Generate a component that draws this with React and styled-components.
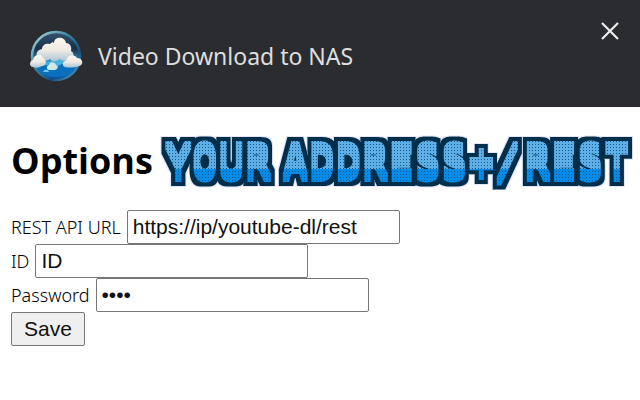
import React from "react";
import styled, { createGlobalStyle } from "styled-components";

const GlobalStyle = createGlobalStyle`
  *, *::before, *::after { box-sizing: border-box; }
  body {
    margin: 0;
    background: #fff;
    color: #000;
    font-family: "Noto Sans", "Open Sans", sans-serif;
  }
`;

const Header = styled.header`
  display: flex;
  align-items: center;
  gap: 15px;
  min-height: 107px;
  padding: 5px 18px 0 29px;
  background: #2b2c2f;
  color: #dedede;
`;

const Title = styled.div`
  flex: 1;
  font-size: 23px;
  line-height: 32px;
`;

const CloseButton = styled.button`
  display: flex;
  align-self: flex-start;
  margin-top: 14px;
  padding: 0;
  border: 0;
  background: none;
  color: #eee;
`;

const Main = styled.main`
  padding: 25px 8px 16px 11px;
`;

const HeadingRow = styled.div`
  display: flex;
  align-items: center;
  gap: 7px;
  margin-bottom: 20px;
`;

const Heading = styled.h1`
  margin: 0;
  font: 700 36px/56px "Open Sans", sans-serif;
`;

const Banner = styled.svg`
  display: block;
  flex: none;
  font: 700 44px "DejaVu Sans Mono", monospace;
`;

const Form = styled.form`
  display: flex;
  flex-direction: column;
  align-items: flex-start;
`;

const Field = styled.div`
  display: flex;
  align-items: center;
  gap: 6px;
  height: 34px;
`;

const Label = styled.label`
  font-size: 18px;
  line-height: 32px;
  font-weight: 300;
`;

const Input = styled.input`
  width: 273px;
  height: 34px;
  padding: 0 5px;
  border: 1px solid #767676;
  border-radius: 2px;
  background: #fff;
  color: #111;
  font: 21px "Liberation Sans", Arial, sans-serif;
`;

const SaveButton = styled.button`
  height: 34px;
  padding: 0 12px;
  border: 1px solid #767676;
  border-radius: 2px;
  background: #efefef;
  color: #111;
  font: 21px "Liberation Sans", Arial, sans-serif;
`;

function CloudLogo() {
  return (
    <svg width="54" height="54" viewBox="0 0 54 54" aria-hidden="true">
      <defs>
        <linearGradient id="sky" x2="0" y2="1">
          <stop offset="0" stopColor="#34546d" />
          <stop offset=".35" stopColor="#1b2f49" />
          <stop offset=".62" stopColor="#2c92c9" />
          <stop offset="1" stopColor="#064a9d" />
        </linearGradient>
        <linearGradient id="rim" x2="1" y2="1">
          <stop offset="0" stopColor="#b5dce4" />
          <stop offset=".4" stopColor="#3a879f" />
          <stop offset=".7" stopColor="#164c80" />
          <stop offset="1" stopColor="#56b8e3" />
        </linearGradient>
        <linearGradient id="cloud" x2="0" y2="1">
          <stop offset="0" stopColor="#fffaf0" />
          <stop offset=".55" stopColor="#eee9e2" />
          <stop offset="1" stopColor="#a9c5d7" />
        </linearGradient>
      </defs>
      <circle cx="27" cy="27" r="24" fill="url(#sky)" stroke="url(#rim)" strokeWidth="2.5" />
      <path d="M6 34c8-4 12-1 16 1 8 4 16-4 26-1-2 9-9 14-21 14S8 43 6 34z" fill="#0870bd" />
      <path d="M11 34c4-3 8 0 11-2 7-4 16-3 20 1-4 3-8 0-11 3-6 4-12 1-20-2z" fill="#4dbbe5" opacity=".8" />
      <path d="M14 32a6 6 0 0 1-1-12c0-4 4-6 8-5 2-2 3-2 4-1 0-7 11-7 12 0 4 0 6 4 5 8 4 2 3 8-2 8-3 3-7 2-9 0-4 3-8 3-10 0-3 2-5 2-7 0z" fill="url(#cloud)" />
      <path d="M4 38c-4 0-4-6 0-7 1-6 9-7 10-2 4 1 4 8-1 8-3 2-6 2-9 1z" fill="url(#cloud)" />
      <path d="M36 38c-3-1-3-6 1-6 1-6 8-8 11-3 4 0 6 3 5 6-3 4-13 4-17 3z" fill="url(#cloud)" />
      <path d="M20 41c-3 0-3-4 0-5 1-4 6-3 7 0 3 1 2 4-1 5z" fill="#d2e7ed" />
      <path d="M14 43c1-3 5-3 6 0z" fill="#7ac8e7" />
    </svg>
  );
}

const words = [
  { x: 5, text: "YOUR" },
  { x: 122, text: "ADDRESS" },
  { x: 308, text: "+" },
  { x: 334, text: "/" },
  { x: 364, text: "REST" },
];

function AddressBanner() {
  return (
    <Banner width="476" height="58" viewBox="0 0 476 58" role="img" aria-label="YOUR ADDRESS+/REST">
      <defs>
        <pattern id="beads" width="3" height="58" patternUnits="userSpaceOnUse">
          <rect width="3" height="37" fill="#5eafe6" />
          <rect y="37" width="3" height="21" fill="#078be8" />
          {Array.from({ length: 19 }, (_, i) => (
            <rect key={i} y={i * 3} width="1" height="1" fill="#145b91" />
          ))}
        </pattern>
        <filter id="tall" filterUnits="userSpaceOnUse" x="0" y="0" width="476" height="58">
          <feMorphology operator="dilate" radius="0 4" />
        </filter>
        <filter id="outline" filterUnits="userSpaceOnUse" x="0" y="0" width="476" height="58">
          <feMorphology operator="dilate" radius="4 8" />
        </filter>
        <filter id="halo" filterUnits="userSpaceOnUse" x="0" y="0" width="476" height="58">
          <feMorphology operator="dilate" radius="5 9" />
        </filter>
        <g id="words">
          {words.map(({ x, text }) => (
            <text key={x} x={x} y="46">{text}</text>
          ))}
        </g>
        <mask id="letters" maskUnits="userSpaceOnUse" x="0" y="0" width="476" height="58">
          <use href="#words" fill="#fff" filter="url(#tall)" />
        </mask>
      </defs>
      <use href="#words" fill="#e4e6f7" filter="url(#halo)" />
      <use href="#words" fill="#052d4b" filter="url(#outline)" />
      <rect width="476" height="58" fill="url(#beads)" mask="url(#letters)" />
    </Banner>
  );
}

export default function App() {
  return (
    <>
      <GlobalStyle />
      <Header>
        <CloudLogo />
        <Title>Video Download to NAS</Title>
        <CloseButton type="button" aria-label="Close">
          <svg width="24" height="24" viewBox="0 0 24 24" fill="none" stroke="currentColor" strokeWidth="2.2">
            <path d="M4 4l16 16M20 4L4 20" />
          </svg>
        </CloseButton>
      </Header>
      <Main>
        <HeadingRow>
          <Heading>Options</Heading>
          <AddressBanner />
        </HeadingRow>
        <Form onSubmit={(e) => e.preventDefault()}>
          <Field>
            <Label htmlFor="url">REST API URL</Label>
            <Input id="url" type="text" defaultValue="https://ip/youtube-dl/rest" />
          </Field>
          <Field>
            <Label htmlFor="user">ID</Label>
            <Input id="user" type="text" defaultValue="ID" />
          </Field>
          <Field>
            <Label htmlFor="password">Password</Label>
            <Input id="password" type="password" defaultValue="pass" />
          </Field>
          <SaveButton type="submit">Save</SaveButton>
        </Form>
      </Main>
    </>
  );
}
